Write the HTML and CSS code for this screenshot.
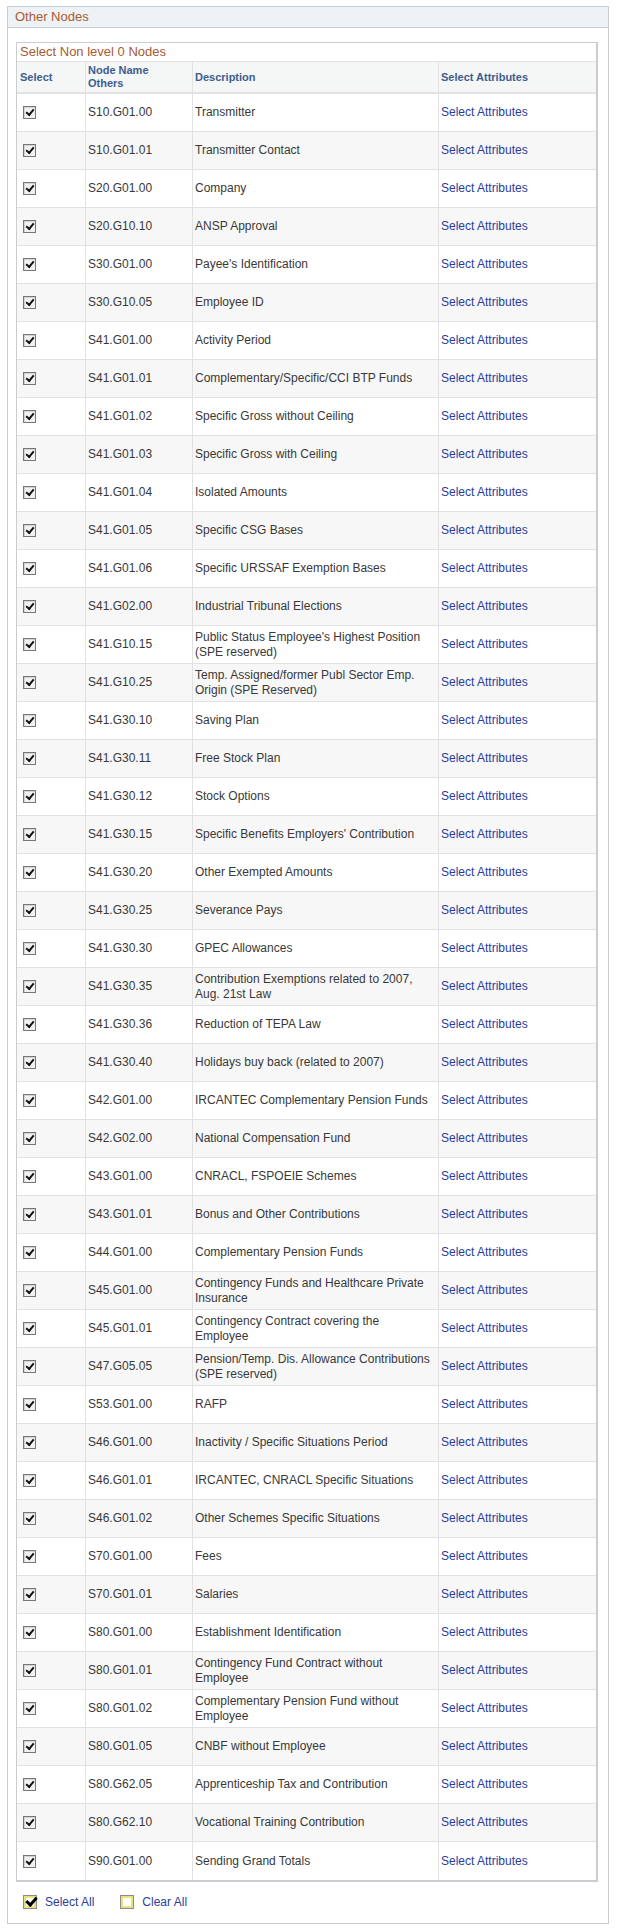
FILE: index.html
```html
<!DOCTYPE html>
<html lang="en">
<head>
<meta charset="utf-8">
<title>Other Nodes</title>
<link rel="stylesheet" href="styles.css">
</head>
<body>
<div class="panel">
  <div class="panel-head">Other Nodes</div>
  <div class="panel-body">
    <div class="gridbox">
      <div class="grid-caption">Select Non level 0 Nodes</div>
      <table class="grid">
        <colgroup><col class="w1"><col class="w2"><col class="w3"><col class="w4"></colgroup>
        <thead>
          <tr><th class="c-sel">Select</th><th>Node Name<br>Others</th><th>Description</th><th>Select Attributes</th></tr>
        </thead>
        <tbody>
          <tr><td class="c-sel"><span class="cb"></span></td><td>S10.G01.00</td><td>Transmitter</td><td><a href="#">Select Attributes</a></td></tr>
          <tr><td class="c-sel"><span class="cb"></span></td><td>S10.G01.01</td><td>Transmitter Contact</td><td><a href="#">Select Attributes</a></td></tr>
          <tr><td class="c-sel"><span class="cb"></span></td><td>S20.G01.00</td><td>Company</td><td><a href="#">Select Attributes</a></td></tr>
          <tr><td class="c-sel"><span class="cb"></span></td><td>S20.G10.10</td><td>ANSP Approval</td><td><a href="#">Select Attributes</a></td></tr>
          <tr><td class="c-sel"><span class="cb"></span></td><td>S30.G01.00</td><td>Payee's Identification</td><td><a href="#">Select Attributes</a></td></tr>
          <tr><td class="c-sel"><span class="cb"></span></td><td>S30.G10.05</td><td>Employee ID</td><td><a href="#">Select Attributes</a></td></tr>
          <tr><td class="c-sel"><span class="cb"></span></td><td>S41.G01.00</td><td>Activity Period</td><td><a href="#">Select Attributes</a></td></tr>
          <tr><td class="c-sel"><span class="cb"></span></td><td>S41.G01.01</td><td>Complementary/Specific/CCI BTP Funds</td><td><a href="#">Select Attributes</a></td></tr>
          <tr><td class="c-sel"><span class="cb"></span></td><td>S41.G01.02</td><td>Specific Gross without Ceiling</td><td><a href="#">Select Attributes</a></td></tr>
          <tr><td class="c-sel"><span class="cb"></span></td><td>S41.G01.03</td><td>Specific Gross with Ceiling</td><td><a href="#">Select Attributes</a></td></tr>
          <tr><td class="c-sel"><span class="cb"></span></td><td>S41.G01.04</td><td>Isolated Amounts</td><td><a href="#">Select Attributes</a></td></tr>
          <tr><td class="c-sel"><span class="cb"></span></td><td>S41.G01.05</td><td>Specific CSG Bases</td><td><a href="#">Select Attributes</a></td></tr>
          <tr><td class="c-sel"><span class="cb"></span></td><td>S41.G01.06</td><td>Specific URSSAF Exemption Bases</td><td><a href="#">Select Attributes</a></td></tr>
          <tr><td class="c-sel"><span class="cb"></span></td><td>S41.G02.00</td><td>Industrial Tribunal Elections</td><td><a href="#">Select Attributes</a></td></tr>
          <tr><td class="c-sel"><span class="cb"></span></td><td>S41.G10.15</td><td>Public Status Employee's Highest Position (SPE reserved)</td><td><a href="#">Select Attributes</a></td></tr>
          <tr><td class="c-sel"><span class="cb"></span></td><td>S41.G10.25</td><td>Temp. Assigned/former Publ Sector Emp. Origin (SPE Reserved)</td><td><a href="#">Select Attributes</a></td></tr>
          <tr><td class="c-sel"><span class="cb"></span></td><td>S41.G30.10</td><td>Saving Plan</td><td><a href="#">Select Attributes</a></td></tr>
          <tr><td class="c-sel"><span class="cb"></span></td><td>S41.G30.11</td><td>Free Stock Plan</td><td><a href="#">Select Attributes</a></td></tr>
          <tr><td class="c-sel"><span class="cb"></span></td><td>S41.G30.12</td><td>Stock Options</td><td><a href="#">Select Attributes</a></td></tr>
          <tr><td class="c-sel"><span class="cb"></span></td><td>S41.G30.15</td><td>Specific Benefits Employers' Contribution</td><td><a href="#">Select Attributes</a></td></tr>
          <tr><td class="c-sel"><span class="cb"></span></td><td>S41.G30.20</td><td>Other Exempted Amounts</td><td><a href="#">Select Attributes</a></td></tr>
          <tr><td class="c-sel"><span class="cb"></span></td><td>S41.G30.25</td><td>Severance Pays</td><td><a href="#">Select Attributes</a></td></tr>
          <tr><td class="c-sel"><span class="cb"></span></td><td>S41.G30.30</td><td>GPEC Allowances</td><td><a href="#">Select Attributes</a></td></tr>
          <tr><td class="c-sel"><span class="cb"></span></td><td>S41.G30.35</td><td>Contribution Exemptions related to 2007, Aug. 21st Law</td><td><a href="#">Select Attributes</a></td></tr>
          <tr><td class="c-sel"><span class="cb"></span></td><td>S41.G30.36</td><td>Reduction of TEPA Law</td><td><a href="#">Select Attributes</a></td></tr>
          <tr><td class="c-sel"><span class="cb"></span></td><td>S41.G30.40</td><td>Holidays buy back (related to 2007)</td><td><a href="#">Select Attributes</a></td></tr>
          <tr><td class="c-sel"><span class="cb"></span></td><td>S42.G01.00</td><td>IRCANTEC Complementary Pension Funds</td><td><a href="#">Select Attributes</a></td></tr>
          <tr><td class="c-sel"><span class="cb"></span></td><td>S42.G02.00</td><td>National Compensation Fund</td><td><a href="#">Select Attributes</a></td></tr>
          <tr><td class="c-sel"><span class="cb"></span></td><td>S43.G01.00</td><td>CNRACL, FSPOEIE Schemes</td><td><a href="#">Select Attributes</a></td></tr>
          <tr><td class="c-sel"><span class="cb"></span></td><td>S43.G01.01</td><td>Bonus and Other Contributions</td><td><a href="#">Select Attributes</a></td></tr>
          <tr><td class="c-sel"><span class="cb"></span></td><td>S44.G01.00</td><td>Complementary Pension Funds</td><td><a href="#">Select Attributes</a></td></tr>
          <tr><td class="c-sel"><span class="cb"></span></td><td>S45.G01.00</td><td>Contingency Funds and Healthcare Private Insurance</td><td><a href="#">Select Attributes</a></td></tr>
          <tr><td class="c-sel"><span class="cb"></span></td><td>S45.G01.01</td><td>Contingency Contract covering the Employee</td><td><a href="#">Select Attributes</a></td></tr>
          <tr><td class="c-sel"><span class="cb"></span></td><td>S47.G05.05</td><td>Pension/Temp. Dis. Allowance Contributions (SPE reserved)</td><td><a href="#">Select Attributes</a></td></tr>
          <tr><td class="c-sel"><span class="cb"></span></td><td>S53.G01.00</td><td>RAFP</td><td><a href="#">Select Attributes</a></td></tr>
          <tr><td class="c-sel"><span class="cb"></span></td><td>S46.G01.00</td><td>Inactivity / Specific Situations Period</td><td><a href="#">Select Attributes</a></td></tr>
          <tr><td class="c-sel"><span class="cb"></span></td><td>S46.G01.01</td><td>IRCANTEC, CNRACL Specific Situations</td><td><a href="#">Select Attributes</a></td></tr>
          <tr><td class="c-sel"><span class="cb"></span></td><td>S46.G01.02</td><td>Other Schemes Specific Situations</td><td><a href="#">Select Attributes</a></td></tr>
          <tr><td class="c-sel"><span class="cb"></span></td><td>S70.G01.00</td><td>Fees</td><td><a href="#">Select Attributes</a></td></tr>
          <tr><td class="c-sel"><span class="cb"></span></td><td>S70.G01.01</td><td>Salaries</td><td><a href="#">Select Attributes</a></td></tr>
          <tr><td class="c-sel"><span class="cb"></span></td><td>S80.G01.00</td><td>Establishment Identification</td><td><a href="#">Select Attributes</a></td></tr>
          <tr><td class="c-sel"><span class="cb"></span></td><td>S80.G01.01</td><td>Contingency Fund Contract without Employee</td><td><a href="#">Select Attributes</a></td></tr>
          <tr><td class="c-sel"><span class="cb"></span></td><td>S80.G01.02</td><td>Complementary Pension Fund without Employee</td><td><a href="#">Select Attributes</a></td></tr>
          <tr><td class="c-sel"><span class="cb"></span></td><td>S80.G01.05</td><td>CNBF without Employee</td><td><a href="#">Select Attributes</a></td></tr>
          <tr><td class="c-sel"><span class="cb"></span></td><td>S80.G62.05</td><td>Apprenticeship Tax and Contribution</td><td><a href="#">Select Attributes</a></td></tr>
          <tr><td class="c-sel"><span class="cb"></span></td><td>S80.G62.10</td><td>Vocational Training Contribution</td><td><a href="#">Select Attributes</a></td></tr>
          <tr><td class="c-sel"><span class="cb"></span></td><td>S90.G01.00</td><td>Sending Grand Totals</td><td><a href="#">Select Attributes</a></td></tr>
        </tbody>
      </table>
    </div>
    <div class="actions">
      <a href="#" class="action"><span class="bigcb on"></span>Select All</a>
      <a href="#" class="action"><span class="bigcb"></span>Clear All</a>
    </div>
  </div>
</div>
</body>
</html>
```

FILE: styles.css
```css
html, body {
  margin: 0;
  padding: 0;
  background: #ffffff;
}
body {
  padding: 6px 0 0 7px;
  font-family: "Liberation Sans", Arial, sans-serif;
  font-size: 12px;
  color: #383838;
}
a {
  color: #2a3c9c;
  text-decoration: none;
}
.panel {
  width: 600px;
  border: 1px solid #c8cdd2;
}
.panel-head {
  height: 20px;
  line-height: 20px;
  padding-left: 7px;
  background: #eef2f4;
  border-bottom: 1px solid #c8cdd2;
  font-size: 13px;
  color: #a85a32;
}
.panel-body {
  padding: 14px 10px 13px 8px;
}
.gridbox {
  width: 579px;
  border: 1px solid #c9cdd2;
  border-right-width: 2px;
  border-bottom-width: 2px;
}
.grid-caption {
  height: 18px;
  line-height: 18px;
  padding-left: 3px;
  font-size: 13px;
  color: #a85a32;
  border-bottom: 1px solid #e2e2e2;
}
.grid {
  width: 579px;
  table-layout: fixed;
  border-collapse: separate;
  border-spacing: 0;
}
.w1 { width: 69px; }
.w2 { width: 107px; }
.w3 { width: 246px; }
.w4 { width: 157px; }
.grid th {
  box-sizing: border-box;
  height: 32px;
  padding: 0 0 0 2px;
  text-align: left;
  vertical-align: middle;
  font-size: 11px;
  line-height: 13px;
  font-weight: bold;
  color: #3e5d8e;
  background: #f5f6f6;
  border-right: 1px solid #e2e2e2;
  border-bottom: 2px solid #e2e2e2;
}
.grid th.c-sel {
  padding-left: 3px;
}
.grid td {
  box-sizing: border-box;
  height: 38px;
  padding: 0 4px 0 2px;
  vertical-align: middle;
  line-height: 15px;
  border-right: 1px solid #e2e2e2;
  border-bottom: 1px solid #e2e2e2;
}
.grid th:last-child,
.grid td:last-child {
  border-right: 0;
}
.grid tbody tr:nth-child(even) td {
  background: #f7f7f7;
}
.grid tbody tr:last-child td {
  border-bottom: 0;
}
.grid td.c-sel {
  padding-left: 6px;
}
.cb {
  position: relative;
  display: block;
  box-sizing: border-box;
  width: 13px;
  height: 13px;
  border: 1px solid #777777;
  background: #f1f1f1;
  box-shadow: inset 1px 1px 0 #d4d4d4;
}
.cb::after {
  content: "";
  position: absolute;
  left: 2px;
  top: 2px;
  width: 6px;
  height: 3px;
  border-left: 2px solid #111;
  border-bottom: 2px solid #111;
  transform: rotate(-50deg);
}
.actions {
  display: flex;
  align-items: center;
  gap: 26px;
  height: 16px;
  margin-top: 12px;
  padding-left: 7px;
}
.action {
  display: flex;
  align-items: center;
  gap: 8px;
  font-size: 12px;
}
.bigcb {
  position: relative;
  box-sizing: border-box;
  width: 14px;
  height: 14px;
  border: 1px solid #8c8c8c;
  background: #ffffff;
  box-shadow: inset 0 0 0 2px #e9e27a;
}
.bigcb.on::after {
  content: "";
  position: absolute;
  left: 2px;
  top: 1px;
  width: 8px;
  height: 4px;
  border-left: 3px solid #000;
  border-bottom: 3px solid #000;
  transform: rotate(-48deg);
}
```
